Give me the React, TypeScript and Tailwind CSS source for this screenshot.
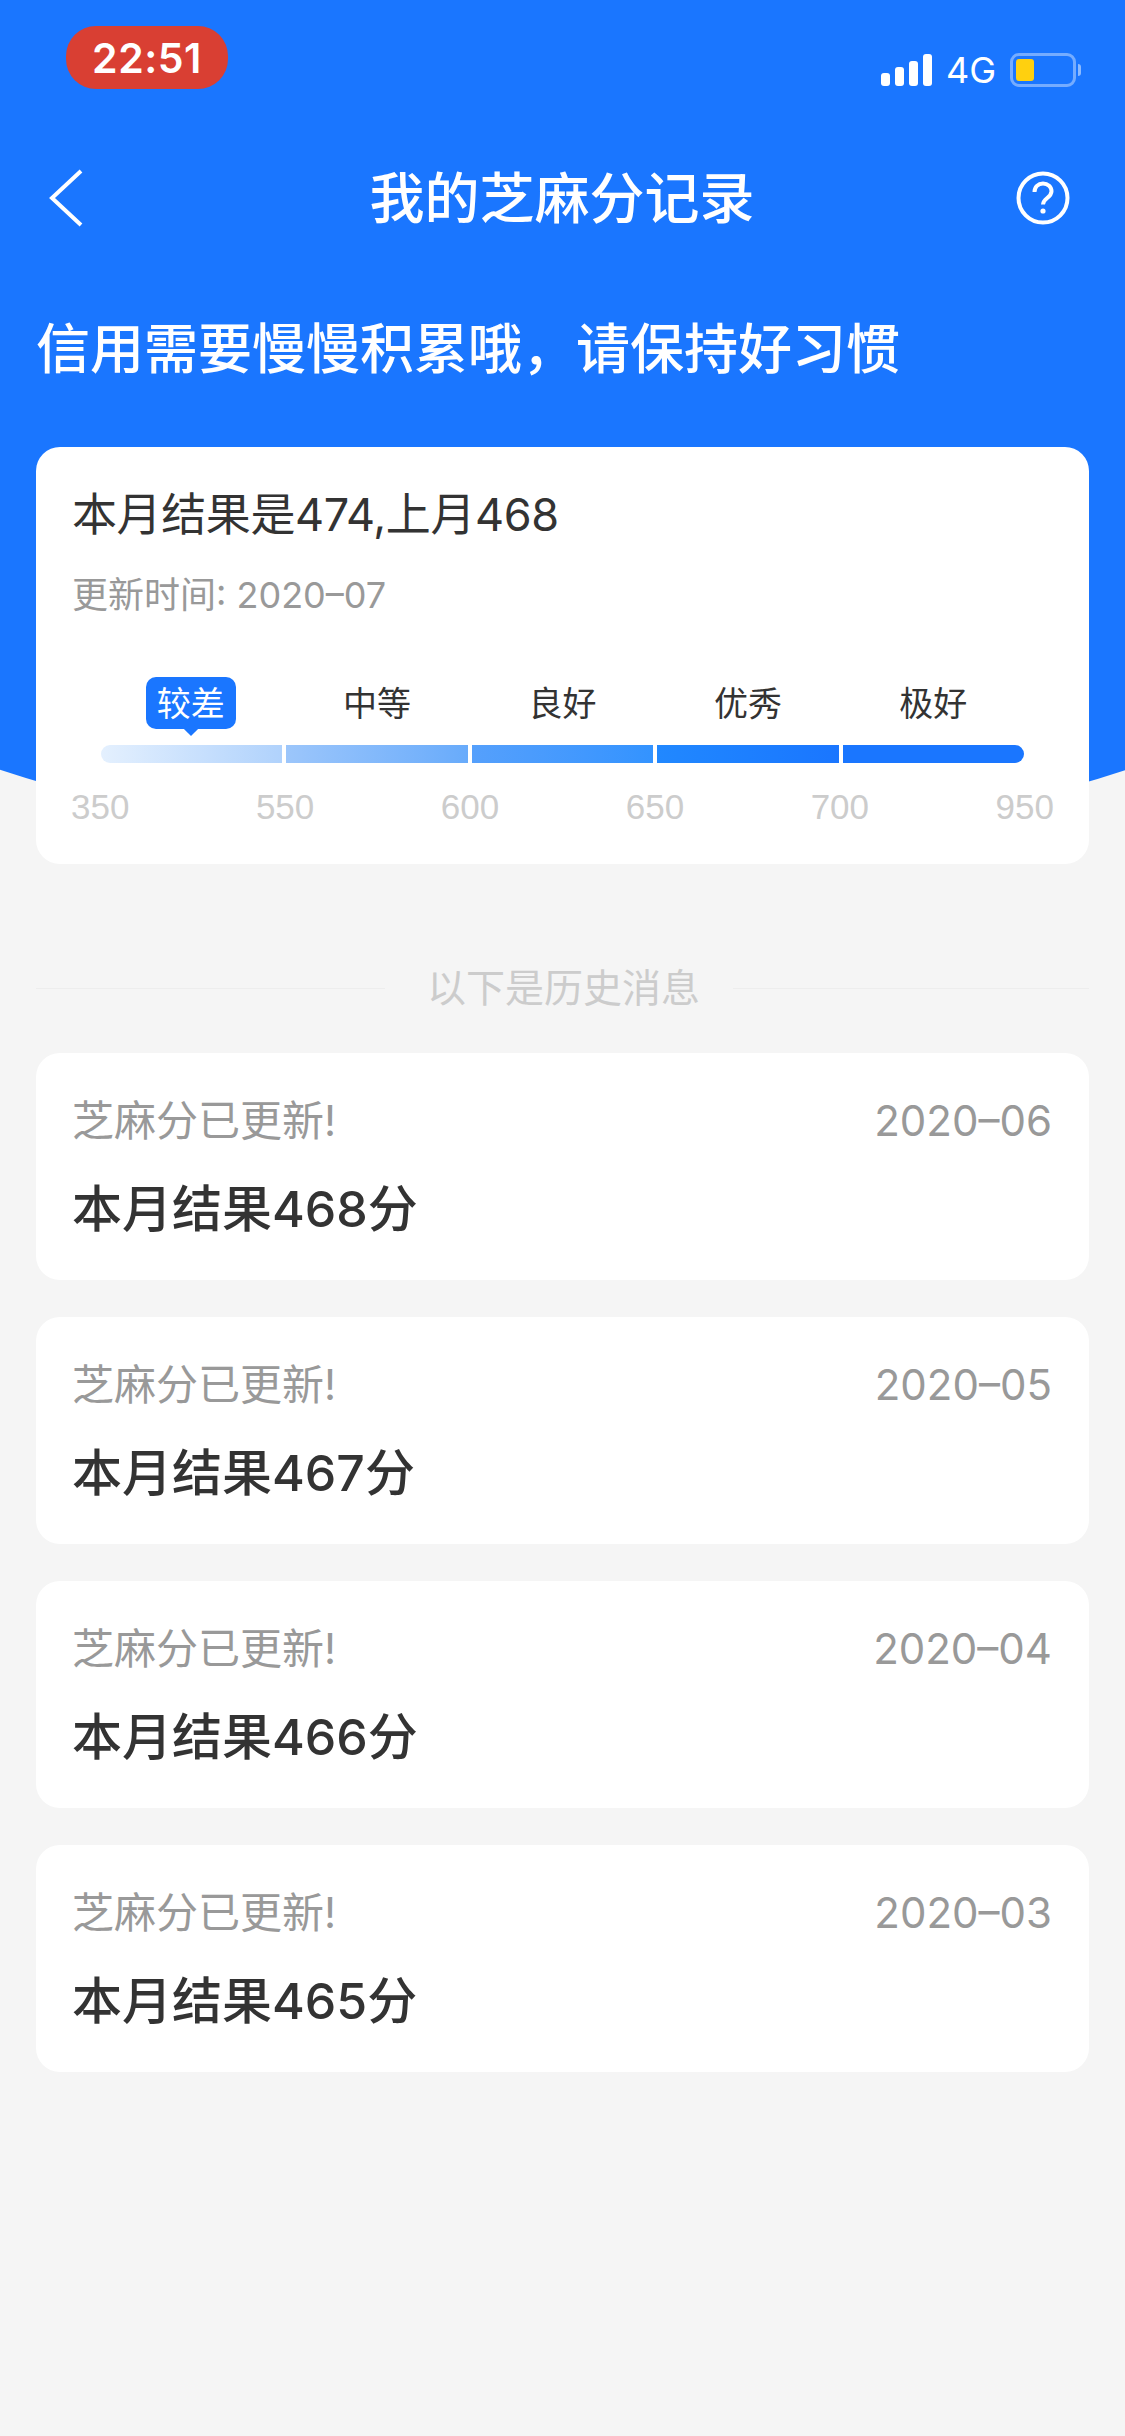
const levels = [
  { label: "较差", active: true },
  { label: "中等" },
  { label: "良好" },
  { label: "优秀" },
  { label: "极好" },
];

const scores = ["350", "550", "600", "650", "700", "950"];

const history = [
  { date: "2020–06", score: 468 },
  { date: "2020–05", score: 467 },
  { date: "2020–04", score: 466 },
  { date: "2020–03", score: 465 },
];

const StatusIcons = () => (
  <div className="flex items-center">
    <div className="flex items-end gap-[5px] h-[32px]">
      <div className="w-[9px] h-[13px] bg-white rounded-[3px]" />
      <div className="w-[9px] h-[19px] bg-white rounded-[3px]" />
      <div className="w-[9px] h-[25px] bg-white rounded-[3px]" />
      <div className="w-[9px] h-[32px] bg-white rounded-[3px]" />
    </div>
    <span className="ml-[14px] text-[36px] leading-[32px] text-white">4G</span>
    <div className="ml-[14px] flex items-center">
      <div className="w-[66px] h-[34px] rounded-[9px] border-[3px] border-white/40 p-[3px]">
        <div className="w-[18px] h-full rounded-[3px] bg-[#ffd00f]" />
      </div>
      <div className="ml-[2px] w-[3px] h-[12px] rounded-r-[3px] bg-white/50" />
    </div>
  </div>
);

export default function App() {
  return (
    <div className="relative w-[1125px] h-[2436px] overflow-hidden bg-[#f5f5f5] font-['Inter','Noto_Sans_CJK_SC',sans-serif]">
      {/* blue curved header background */}
      <div className="absolute left-[-237px] top-[-100px] w-[1600px] h-[948px] bg-[#1a76ff] rounded-b-[800px_270px]" />

      <div className="relative">
        {/* Status bar */}
        <div className="flex justify-between h-[150px] pl-[66px] pr-[44px]">
          <div className="mt-[26px] w-[162px] h-[63px] rounded-[30px] bg-[#d93f33] flex items-center justify-center text-white text-[41px] font-semibold tracking-[0.5px] pt-[2px]">
            22:51
          </div>
          <div className="mt-[53px] self-start">
            <StatusIcons />
          </div>
        </div>

        {/* Nav */}
        <div className="grid grid-cols-[60px_1fr_54px] items-center h-[96px] pl-[48px] pr-[55px]">
          <svg width="36" height="58" viewBox="0 0 36 58" fill="none">
            <path d="M33 2 L4 29 L33 56" stroke="white" strokeWidth="4" />
          </svg>
          <h1 className="text-center text-[55px] leading-[96px] font-medium text-white">我的芝麻分记录</h1>
          <svg width="54" height="54" viewBox="0 0 54 54" fill="none">
            <circle cx="27" cy="27" r="24.5" stroke="white" strokeWidth="4" />
            <path d="M18.5 21c0-5 3.6-8.5 8.5-8.500s8.500 3.300 8.500 7.800c0 6.700-8.500 6.700-8.500 13.200" stroke="white" strokeWidth="4" />
            <circle cx="27" cy="40" r="2.600" fill="white" />
          </svg>
        </div>

        {/* Slogan */}
        <div className="h-[201px] pl-[36px] pt-[64px]">
          <p className="text-[54px] leading-[80px] font-medium text-white">信用需要慢慢积累哦，请保持好习惯</p>
        </div>

        {/* Score card */}
        <div className="mx-[36px] h-[417px] rounded-[24px] bg-white">
          <div className="pl-[36px] pr-[37px] pt-[36px]">
            <p className="text-[45px] leading-[64px] tracking-[-0.4px] text-[#333]">本月结果是474,上月468</p>
            <p className="mt-[23px] text-[36px] leading-[50px] text-[#999]">更新时间: 2020–07</p>
          </div>

          <div className="mt-[57px] mx-[65px] grid grid-cols-5 gap-x-[4px]">
            {levels.map((level) => (
              <div key={level.label} className="h-[52px] flex items-center justify-center">
                {level.active ? (
                  <span className="relative mr-[2px] w-[90px] h-[52px] rounded-[10px] bg-[#1a76ff] flex items-center justify-center text-[34px] text-white">
                    {level.label}
                    <span className="absolute left-[40px] bottom-[-5px] w-[10px] h-[10px] rotate-45 bg-[#1a76ff]" />
                  </span>
                ) : (
                  <span className="text-[34px] text-[#333]">{level.label}</span>
                )}
              </div>
            ))}
          </div>

          <div className="mt-[16px] mx-[65px] h-[18px] grid grid-cols-5 gap-x-[4px]">
            <div className="rounded-l-[9px] bg-gradient-to-r from-[#e4f0fe] to-[#b0d2fc]" />
            <div className="bg-gradient-to-r from-[#9cc6fb] to-[#68abfb]" />
            <div className="bg-gradient-to-r from-[#55a0fc] to-[#3393ff]" />
            <div className="bg-gradient-to-r from-[#2188ff] to-[#1a76ff]" />
            <div className="rounded-r-[9px] bg-[#1a76ff]" />
          </div>

          <div className="mt-[20px] mx-[35px] flex justify-between font-['Liberation_Sans',sans-serif] text-[35px] leading-[48px] text-[#ccc]">
            {scores.map((score) => (
              <span key={score}>{score}</span>
            ))}
          </div>
        </div>

        {/* Divider */}
        <div className="mt-[92px] mx-[36px] h-[64px] flex items-center">
          <div className="w-[349px] h-px bg-[#ededed]" />
          <span className="ml-[42px] mr-[33px] text-[39px] text-[#ccc]">以下是历史消息</span>
          <div className="flex-1 h-px bg-[#ededed]" />
        </div>

        {/* History */}
        <div className="mt-[33px] mx-[36px] flex flex-col gap-y-[37px]">
          {history.map((item) => (
            <div key={item.date} className="h-[227px] rounded-[24px] bg-white pl-[36px] pr-[37px] pt-[40px]">
              <div className="flex justify-between items-center h-[54px] text-[42px] text-[#999]">
                <span>芝麻分已更新!</span>
                <span>{item.date}</span>
              </div>
              <p className="mt-[26px] text-[50px] leading-[72px] font-medium text-[#333]">本月结果{item.score}分</p>
            </div>
          ))}
        </div>
      </div>
    </div>
  );
}
